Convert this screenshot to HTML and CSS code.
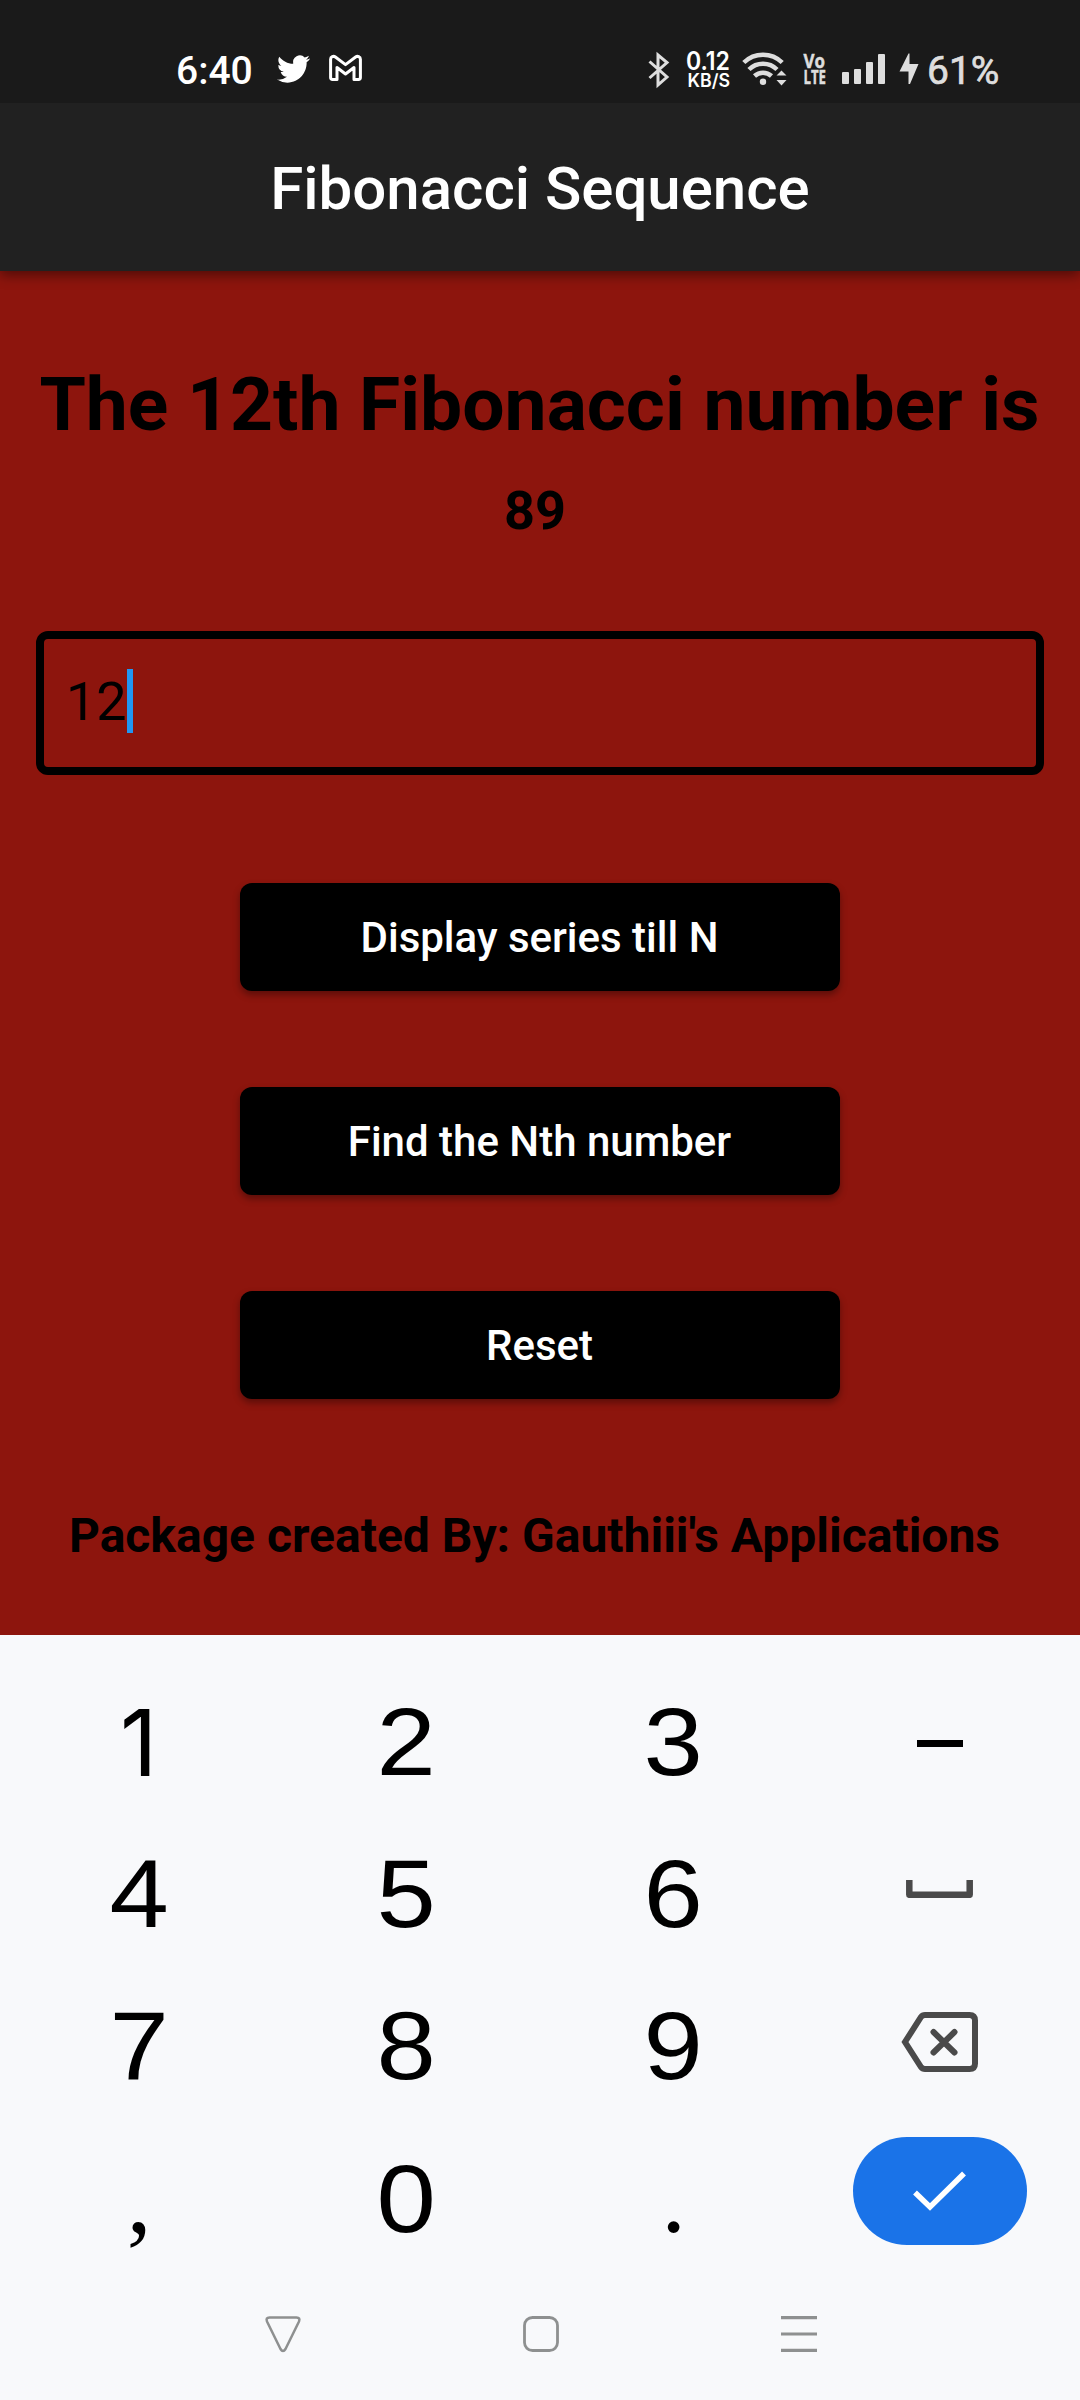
FILE: index.html
```html
<!DOCTYPE html>
<html lang="en">
<head>
<meta charset="utf-8">
<title>Fibonacci Sequence</title>
<link rel="stylesheet" href="styles.css">
</head>
<body>
<div class="status">
  <span class="clock">6:40</span>
  <svg class="twitter" width="33" height="28" viewBox="0 2 24 20" preserveAspectRatio="none"><path fill="#fff" d="M23.953 4.57a10 10 0 01-2.825.775 4.958 4.958 0 002.163-2.723c-.951.555-2.005.959-3.127 1.184a4.92 4.92 0 00-8.384 4.482C7.69 8.095 4.067 6.13 1.64 3.162a4.822 4.822 0 00-.666 2.475c0 1.71.87 3.213 2.188 4.096a4.904 4.904 0 01-2.228-.616v.06a4.923 4.923 0 003.946 4.827 4.996 4.996 0 01-2.212.085 4.936 4.936 0 004.604 3.417 9.867 9.867 0 01-6.102 2.105c-.39 0-.779-.023-1.17-.067a13.995 13.995 0 007.557 2.209c9.053 0 13.998-7.496 13.998-13.985 0-.21 0-.42-.015-.63A9.935 9.935 0 0024 4.59z"/></svg>
  <svg class="gmail" width="33" height="26" viewBox="0 0 33 26"><path fill="none" stroke="#fff" stroke-width="3" stroke-linejoin="round" d="M1.6 22.5V4.2C1.6 1.8 4.4.6 6.4 2L16.5 9.6 26.600 2C28.600.6 31.400 1.800 31.400 4.200V22.500Q31.400 24.400 29.500 24.400H25V12.500L16.500 19 8 12.500V24.400H3.500Q1.600 24.400 1.600 22.500Z"/></svg>
  <div class="system">
    <svg class="bluetooth" width="22" height="36" viewBox="0 0 22 36"><path fill="none" stroke="#dedede" stroke-width="3" d="M1.500 9.500L19 25 10 33V3L19 10.500 1.500 26"/></svg>
    <svg class="speed" width="46" height="38" viewBox="0 0 46 38"><text class="speed-num" x="0" y="18.500" textLength="44" lengthAdjust="spacingAndGlyphs">0.12</text><text class="speed-unit" x="1.500" y="35.500" textLength="42.500" lengthAdjust="spacingAndGlyphs">KB/S</text></svg>
    <svg class="wifi" width="46" height="36" viewBox="0 0 46 36"><g fill="none" stroke="#dedede" stroke-width="4.500"><path d="M1.800 11.500A27.500 27.500 0 0 1 40.200 11.500"/><path d="M7 18.500A19.800 19.800 0 0 1 35 18.500"/><path d="M12.500 25A12.500 12.500 0 0 1 29.500 25"/></g><circle cx="21" cy="30.700" r="3.200" fill="#dedede"/><path fill="#dedede" d="M34.500 24.500L39.500 19.500 44.500 24.500ZM34.500 29L39.500 34.500 44.500 29Z"/></svg>
    <svg class="volte" width="24" height="34" viewBox="0 0 24 34"><text class="lte" x="0.500" y="14.500" textLength="21.500" lengthAdjust="spacingAndGlyphs">Vo</text><text class="lte" x="0.500" y="31" textLength="22.500" lengthAdjust="spacingAndGlyphs">LTE</text></svg>
    <svg class="signal" width="44" height="32" viewBox="0 0 44 32"><g fill="#dedede"><rect x="0" y="19" width="7" height="12" rx="1"/><rect x="12" y="16" width="7" height="15" rx="1"/><rect x="24" y="9" width="7" height="22" rx="1"/><rect x="36" y="1" width="7" height="30" rx="1"/></g></svg>
    <svg class="bolt" width="20" height="32" viewBox="0 0 20 32"><path fill="#dedede" d="M9.500 0.500L.5 18.500H9.500V31H11L19.500 11H10.500V.5Z"/></svg>
    <span class="battery">61%</span>
  </div>
</div>
<header class="appbar"><h1 class="title">Fibonacci Sequence</h1></header>
<main class="body">
  <h2 class="result">The 12th Fibonacci number is</h2>
  <p class="value">89</p>
  <div class="field"><span class="entry">12</span><span class="caret"></span></div>
  <div class="actions">
    <button class="action">Display series till N</button>
    <button class="action">Find the Nth number</button>
    <button class="action">Reset</button>
  </div>
  <p class="credit">Package created By: Gauthiii's Applications</p>
</main>
<section class="keyboard">
  <div class="keys">
    <span class="key"><b class="glyph one">1</b></span><span class="key"><b class="glyph">2</b></span><span class="key"><b class="glyph">3</b></span>
    <span class="key minus"><svg width="46" height="8"><rect width="46" height="7" y="1"/></svg></span>
    <span class="key"><b class="glyph">4</b></span><span class="key"><b class="glyph">5</b></span><span class="key"><b class="glyph">6</b></span>
    <span class="key"><svg width="67" height="18" viewBox="0 0 67 18"><path fill="none" stroke="#4a4a4a" stroke-width="6.500" stroke-linejoin="round" d="M3.300 0V14.800H63.700V0"/></svg></span>
    <span class="key"><b class="glyph">7</b></span><span class="key"><b class="glyph">8</b></span><span class="key"><b class="glyph">9</b></span>
    <span class="key delete"><svg width="78" height="60" viewBox="0 0 78 60"><path fill="none" stroke="#4a4a4a" stroke-width="6" d="M24 3H68.500Q74 3 74 8.500V51.500Q74 57 68.500 57H24Q21.500 57 20 55L4 30 20 5Q21.500 3 24 3Z"/><path stroke="#4a4a4a" stroke-width="6" stroke-linecap="round" d="M32.500 20L53.500 40.500M53.500 20L32.500 40.500"/></svg></span>
    <span class="key"><b class="glyph mark">,</b></span><span class="key"><b class="glyph zero">0</b></span><span class="key"><b class="glyph mark">.</b></span>
    <span class="key"><span class="enter"><svg width="54" height="40" viewBox="0 0 54 40"><path fill="none" stroke="#fff" stroke-width="5.500" d="M2 21.500L17 36 51 2.500"/></svg></span></span>
  </div>
  <nav class="nav">
    <svg width="38" height="38" viewBox="0 0 38 38"><path fill="none" stroke="#8e9090" stroke-width="2.500" stroke-linejoin="round" d="M5.500 2.500H32.500Q36.500 2.500 35 6.500L21.500 34Q19 38 16.500 34L3 6.500Q1.500 2.500 5.500 2.500Z"/></svg>
    <svg width="38" height="38" viewBox="0 0 38 38"><rect x="2.500" y="2.500" width="33" height="33" rx="8" fill="none" stroke="#8e9090" stroke-width="2.800"/></svg>
    <svg width="38" height="38" viewBox="0 0 38 38"><path stroke="#8e9090" stroke-width="3.200" d="M1 2.600H37M1 19H37M1 35.400H37"/></svg>
  </nav>
</section>
</body>
</html>
```
FILE: styles.css
```css
* { box-sizing: border-box; margin: 0; padding: 0; }
body { width: 1080px; height: 2400px; display: flex; flex-direction: column; overflow: hidden; background: #8d150d; font-family: Roboto, "Liberation Sans", sans-serif; }

.status { flex: none; position: relative; z-index: 1; height: 103px; background: #1a1a1a; display: flex; align-items: flex-start; padding-left: 176px; color: #fff; }
.status svg { display: block; flex: none; overflow: visible; }
.clock { width: 101px; margin-top: 48px; font-size: 39px; line-height: 46px; font-weight: 500; white-space: nowrap; }
.twitter { margin-top: 55px; }
.gmail { margin: 55px 0 0 19px; }
.system { flex: 1; display: flex; align-items: flex-start; padding-left: 286px; }
.bluetooth { margin-top: 52px; }
.speed { margin: 51px 0 0 16px; }
.speed-num, .speed-unit { fill: #fff; font-family: Inter, sans-serif; font-weight: 600; }
.speed-num { font-size: 25px; }
.speed-unit { font-size: 18px; }
.wifi { margin: 51px 0 0 10px; }
.volte { margin: 53px 0 0 15px; }
.lte { fill: #dedede; stroke: #dedede; stroke-width: .5px; font-family: "Open Sans", sans-serif; font-weight: 700; font-size: 20px; }
.signal { margin: 53px 0 0 15px; }
.bolt { margin: 53px 0 0 13px; }
.battery { margin: 48px 0 0 8px; font-size: 39px; line-height: 46px; color: #dedede; -webkit-text-stroke: .7px #dedede; }

.appbar { flex: none; height: 168px; background: #212121; display: flex; align-items: center; justify-content: center; padding-top: 4px; box-shadow: 0 4px 12px rgba(0,0,0,.45); }
.title { font-size: 60px; line-height: 70px; font-weight: 500; color: #fff; white-space: nowrap; }

.body { flex: none; height: 1364px; padding: 0 36px; display: flex; flex-direction: column; color: #000; }
.result { margin: 89px 1px 0 0; font-size: 75px; line-height: 88px; font-weight: 700; text-align: center; white-space: nowrap; }
.value { margin: 31px 10px 0 0; font-size: 54px; line-height: 63px; font-weight: 700; text-align: center; }
.field { margin-top: 89px; height: 144px; border: 8px solid #000; border-radius: 12px; display: flex; align-items: flex-start; padding: 30px 0 0 22px; }
.entry { font-size: 54px; line-height: 63px; padding-top: 1px; }
.caret { width: 6px; height: 64px; background: #2196f3; }
.actions { margin-top: 108px; display: flex; flex-direction: column; align-items: center; gap: 96px; }
.action { width: 600px; height: 108px; border: 0; border-radius: 12px; background: #000; color: #fff; font: 500 42px/49px Roboto, sans-serif; padding-right: 1px; box-shadow: 0 4px 7px rgba(0,0,0,.35); }
.credit { margin: 109px 11px 0 0; font-size: 48px; line-height: 56px; font-weight: 700; text-align: center; white-space: nowrap; }

.keyboard { flex: 1; background: #f8f9fb; padding-top: 26px; }
.keys { display: grid; grid-template-columns: repeat(4, 267.300px); grid-template-rows: repeat(4, 151.700px); padding-left: 4px; }
.key { display: flex; align-items: center; justify-content: center; }
.minus { padding-top: 12px; }
.delete { padding-top: 3px; }
.glyph { display: block; font: 400 97px/110px "Liberation Sans", sans-serif; color: #000; padding: 11px 0 0 2px; transform: scaleX(1.1); }
.one { font: 400 92px/110px Inter, sans-serif; transform: none; padding: 12px 0 0 2px; }
.zero { padding-top: 15px; }
.mark { font: 400 99px/110px "Liberation Serif", serif; padding: 14px 0 0 3px; transform: none; }
.enter { width: 174px; height: 108px; border-radius: 54px; background: #1a73e8; display: flex; align-items: center; justify-content: center; margin-top: -2px; padding-left: 1px; }
.nav { display: flex; justify-content: space-between; padding: 47px 262px 0 264px; }
```
